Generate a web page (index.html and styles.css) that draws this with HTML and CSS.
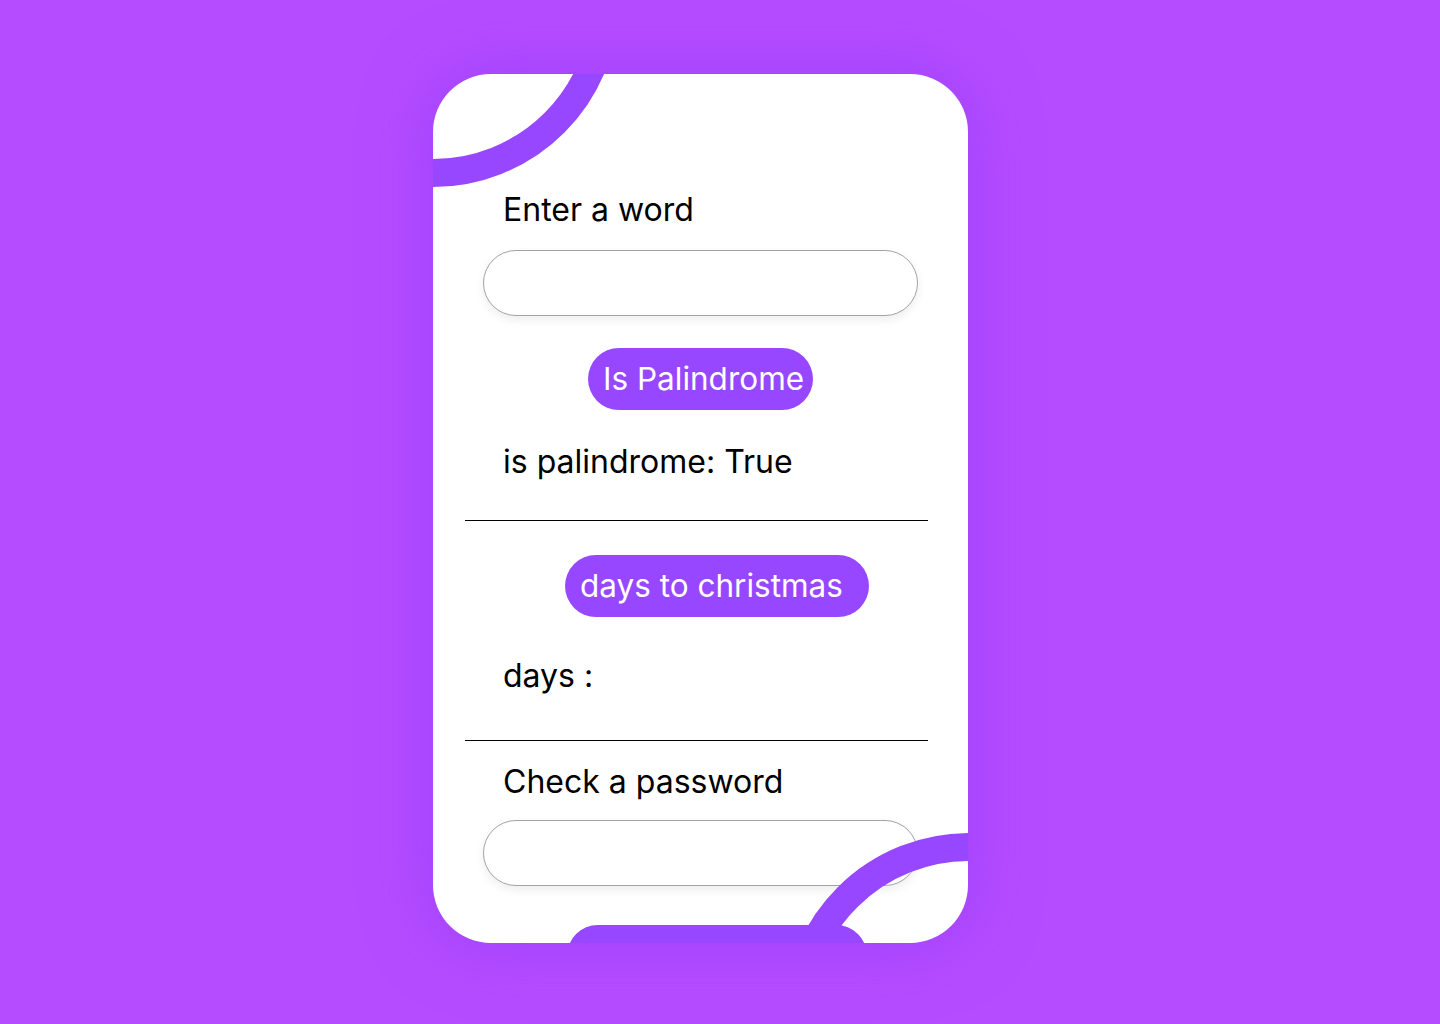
FILE: index.html
```html
<!DOCTYPE html>
<html lang="en">
<head>
<meta charset="utf-8">
<title>Utilities</title>
<link rel="stylesheet" href="styles.css">
</head>
<body>
<main class="stage">
  <section class="card">
    <div class="content">
      <label class="label label-first">Enter a word</label>
      <input class="field" type="text">
      <div class="btn-row">
        <button class="btn btn-pal">Is Palindrome</button>
      </div>
      <p class="result result-first">is palindrome: True</p>
      <hr class="divider divider-first">
      <div class="btn-row btn-row-offset">
        <button class="btn btn-days">days to christmas</button>
      </div>
      <p class="result result-days">days :</p>
      <hr class="divider divider-second">
      <label class="label label-pass">Check a password</label>
      <input class="field field-pass" type="password">
      <div class="btn-row btn-row-offset btn-row-last">
        <button class="btn btn-pass">check password</button>
      </div>
    </div>
    <span class="ring ring-top"></span>
    <span class="ring ring-bottom"></span>
  </section>
</main>
</body>
</html>
```

FILE: styles.css
```css
* { box-sizing: border-box; }
html, body {
  margin: 0;
  padding: 0;
  width: 1440px;
  height: 1024px;
  overflow: hidden;
}
body {
  background: #b64cff;
  font-family: Inter, "Noto Sans", sans-serif;
}
.stage {
  display: flex;
  justify-content: flex-start;
  padding-top: 74px;
  padding-left: 433px;
}
.card {
  position: relative;
  width: 535px;
  height: 869px;
  background: #ffffff;
  border-radius: 58px;
  overflow: hidden;
  box-shadow: 0 0 60px 8px rgba(140, 60, 255, 0.5);
}
.content {
  display: flex;
  flex-direction: column;
  padding: 116px 50px 0 50px;
}
.label, .result {
  display: block;
  margin: 0;
  padding-left: 20px;
  font-size: 32px;
  line-height: 39px;
  color: #000;
  font-weight: 400;
}
.field {
  display: block;
  width: 435px;
  height: 66px;
  margin: 21px 0 0 0;
  border: 1px solid #a3a3a3;
  border-radius: 33px;
  background: #fff;
  box-shadow: 0 4px 10px rgba(0, 0, 0, 0.07);
  font-family: inherit;
  font-size: 24px;
  padding: 0 24px;
  outline: none;
}
.field-pass { margin-top: 19px; }
.btn-row {
  display: flex;
  justify-content: center;
  margin-top: 32px;
}
.btn-row-offset { padding-left: 33px; }
.btn {
  height: 62px;
  padding: 0 0 0 15px;
  border: none;
  border-radius: 31px;
  background: #9747ff;
  color: #fff;
  font-family: inherit;
  font-size: 31.5px;
  line-height: 62px;
  text-align: left;
  white-space: nowrap;
  overflow: hidden;
}
.btn-pal { width: 225px; }
.btn-days { width: 304px; }
.btn-pass { width: 300px; }
.result-first { margin-top: 32px; }
.divider {
  border: none;
  border-top: 1px solid #000;
  height: 0;
  margin: 0 -10px 0 -18px;
}
.divider-first { margin-top: 39px; }
.divider-first + .btn-row { margin-top: 34px; }
.result-days { margin-top: 39px; }
.divider-second { margin-top: 45px; }
.label-pass { margin-top: 21px; }
.btn-row-last { margin-top: 39px; }
.ring {
  position: absolute;
  width: 372px;
  height: 372px;
  border: 28px solid #9747ff;
  border-radius: 50%;
  z-index: 2;
}
.ring-top {
  left: -186px;
  top: -259px;
}
.ring-bottom {
  left: 350px;
  top: 759px;
}
```
